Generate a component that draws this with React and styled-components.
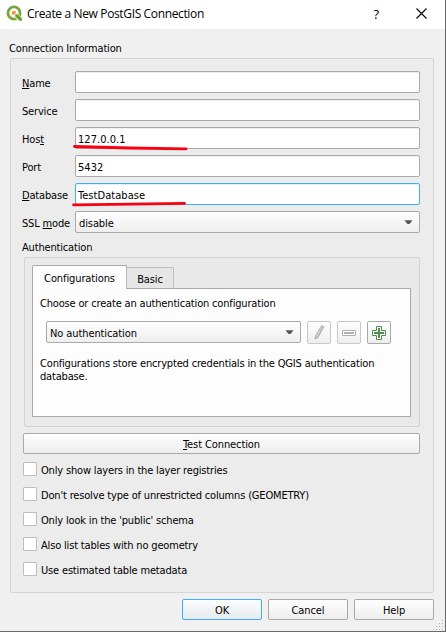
import React from 'react';
import styled, { createGlobalStyle, css } from 'styled-components';

const GlobalStyle = createGlobalStyle`
  *, *::before, *::after { box-sizing: border-box; }
  body {
    margin: 0;
    background: #fff;
    font: 11px/13px "DejaVu Sans Condensed", "DejaVu Sans", sans-serif;
    letter-spacing: -0.17px;
    color: #000;
  }
`;

const raised = css`
  border: 1px solid #a9a9a9;
  border-radius: 2px;
  background: linear-gradient(#fefefe, #eeeeee);
`;

const Dialog = styled.div`
  width: 446px;
  height: 632px;
  background: #f0f0f0;
  border-right: 1px solid #6b6b6b;
  border-bottom: 1px solid #6b6b6b;
  display: flex;
  flex-direction: column;
  position: relative;
`;

const TitleBar = styled.header`
  height: 29px;
  background: #fff;
  display: flex;
  align-items: center;
  padding: 0 18px 2px 6px;
`;

const Title = styled.h1`
  margin: 1px 0 0 4px;
  font: 12px/16px "Open Sans", sans-serif;
  letter-spacing: -0.36px;
  flex: 1;
`;

const HelpMark = styled.span`
  font: 500 13px/16px "Open Sans", sans-serif;
  margin-right: 37px;
`;

const Content = styled.main`
  padding: 13px 11px 0 10px;
  display: flex;
  flex-direction: column;
`;

const GroupTitle = styled.div`
  height: 16px;
  margin-left: ${(p) => p.$shift || 0}px;
`;

const Group = styled.section`
  height: 535px;
  border: 1px solid #d5d5d5;
  border-radius: 2px;
  background: #ececec;
  padding: 12px 13px 0 12px;
`;

const FormRow = styled.label`
  display: grid;
  grid-template-columns: 52px 345px;
  align-items: center;
  height: 22px;
  margin-bottom: 6px;
`;

const FormLabel = styled.span`
  padding-top: 2px;
  margin-left: -1px;
`;

const Field = styled.div`
  height: 22px;
  border: 1px solid ${(p) => (p.$focused ? '#3daefd' : '#a9a9a9')};
  border-radius: 2px;
  background: #fff;
  box-shadow: inset 0 1px 0 ${(p) => (p.$focused ? '#dff1fe' : '#f0f0f0')};
  padding: 5px 2px 0;
  letter-spacing: 0.05px;
`;

const Combo = styled.div`
  ${raised}
  height: 22px;
  width: ${(p) => p.$width}px;
  display: flex;
  align-items: center;
  justify-content: space-between;
  padding: 1px 6px 0 3px;
  letter-spacing: -0.1px;
`;

const ComboText = styled.span`
  padding-top: 1px;
`;

const AuthTitle = styled.div`
  height: 18px;
  padding-top: 2px;
  margin-left: -1px;
`;

const AuthGroup = styled.section`
  height: 170px;
  width: 396px;
  margin-left: 1px;
  border: 1px solid #d3d3d3;
  border-radius: 2px;
  background: #e9e9e9;
  padding: 7px 8px 0 7px;
`;

const Tabs = styled.div`
  display: flex;
  align-items: flex-end;
  height: 24px;
  position: relative;
`;

const Tab = styled.div`
  border: 1px solid ${(p) => (p.$active ? '#a9a9a9' : '#bcbcbc')};
  border-bottom: 0;
  border-radius: 2px 2px 0 0;
  width: ${(p) => p.$width}px;
  height: ${(p) => (p.$active ? 24 : 21)}px;
  margin-bottom: ${(p) => (p.$active ? 0 : 1)}px;
  margin-left: ${(p) => (p.$active ? 0 : -1)}px;
  background: ${(p) => (p.$active ? '#fdfdfd' : '#e6e6e6')};
  padding-top: ${(p) => (p.$active ? 6 : 5)}px;
  text-align: center;
  letter-spacing: -0.1px;
`;

const TabPanel = styled.div`
  height: 129px;
  width: 379px;
  margin-top: -1px;
  border: 1px solid #a9a9a9;
  background: #fdfdfd;
  padding: 8px 7px;
`;

const ConfigRow = styled.div`
  display: flex;
  gap: 6px;
  margin: 11px 0 13px 6px;
  height: 23px;
`;

const ToolButton = styled.button`
  ${raised}
  border-color: ${(p) => (p.disabled ? '#c8c8c8' : '#a9a9a9')};
  width: 24px;
  height: 23px;
  padding: 0;
  display: grid;
  place-items: center;
`;

const Note = styled.p`
  margin: 0;
`;

const Button = styled.button`
  ${raised}
  width: ${(p) => p.$width}px;
  height: 21px;
  padding: 2px 0 0;
  font: inherit;
  letter-spacing: -0.1px;
  color: #000;
  ${(p) => p.$primary && css`
    border-color: #3daefd;
    background: linear-gradient(#fcfdfe, #e6ebef);
  `}
`;

const TestButton = styled(Button)`
  display: block;
  margin: 6px 0 8px;
`;

const CheckRow = styled.label`
  display: flex;
  align-items: center;
  gap: 4px;
  height: 14px;
  margin-bottom: 11px;
`;

const CheckBox = styled.span`
  width: 14px;
  height: 14px;
  border: 1px solid #bdbdbd;
  border-radius: 1px;
  background: #fff;
`;

const CheckText = styled.span`
  padding-top: 2px;
`;

const Footer = styled.footer`
  display: flex;
  justify-content: flex-end;
  gap: 6px;
  margin-top: 6px;
`;

const Overlay = styled.svg`
  position: absolute;
  left: ${(p) => p.$x}px;
  top: ${(p) => p.$y}px;
  pointer-events: none;
`;

const Arrow = () => (
  <svg width="9" height="5" viewBox="0 0 9 5"><path d="M.5.3h8L5.5 4h-2z" fill="#555" /></svg>
);

const Logo = () => (
  <svg width="17" height="17" viewBox="0 0 17 17">
    <circle cx="8" cy="8" r="6.1" fill="none" stroke="#78a83c" strokeWidth="2.8" />
    <path d="M8.5 8.500l7 7" stroke="#fff" strokeWidth="5" />
    <path d="M9.200 9.200h2.900l3.900 4v2.500h-2.500L9.200 11.800z" fill="#6fa32f" />
    <path d="M6.200 6.200h3.600v1.600L8 9.800H6.200z" fill="#ee8a35" />
  </svg>
);

const fields = [
  { key: 'N', after: 'ame', value: '' },
  { before: 'Service', value: '' },
  { before: 'Hos', key: 't', value: '127.0.0.1' },
  { before: 'Port', value: '5432' },
  { key: 'D', after: 'atabase', value: 'TestDatabase', focused: true },
];

const options = [
  'Only show layers in the layer registries',
  "Don't resolve type of unrestricted columns (GEOMETRY)",
  "Only look in the 'public' schema",
  'Also list tables with no geometry',
  'Use estimated table metadata',
];

export default function App() {
  return (
    <>
      <GlobalStyle />
      <Dialog>
        <TitleBar>
          <Logo />
          <Title>Create a New PostGIS Connection</Title>
          <HelpMark>?</HelpMark>
          <svg width="11" height="11" viewBox="0 0 11 11"><path d="M.5.5l10 10M10.5.5l-10 10" stroke="#000" strokeWidth="1.1" /></svg>
        </TitleBar>
        <Content>
          <GroupTitle $shift={-1}>Connection Information</GroupTitle>
          <Group>
            {fields.map((f) => (
              <FormRow key={f.value + (f.before || f.key)}>
                <FormLabel>{f.before}{f.key && <u>{f.key}</u>}{f.after}</FormLabel>
                <Field $focused={f.focused}>{f.value}</Field>
              </FormRow>
            ))}
            <FormRow>
              <FormLabel>SSL <u>m</u>ode</FormLabel>
              <Combo $width={345}><ComboText>disable</ComboText><Arrow /></Combo>
            </FormRow>
            <AuthTitle>Authentication</AuthTitle>
            <AuthGroup>
              <Tabs>
                <Tab $active $width={95}>Configurations</Tab>
                <Tab $width={48}>Basic</Tab>
              </Tabs>
              <TabPanel>
                <Note>Choose or create an authentication configuration</Note>
                <ConfigRow>
                  <Combo $width={255}><ComboText>No authentication</ComboText><Arrow /></Combo>
                  <ToolButton disabled>
                    <svg width="14" height="17" viewBox="0 0 14 17">
                      <path d="M9.5 1l3 1.500-6 11L2.500 16l.5-4z" fill="#b4b4b4" />
                      <path d="M10 3l-5.500 10" stroke="#dedede" />
                    </svg>
                  </ToolButton>
                  <ToolButton disabled>
                    <svg width="14" height="6" viewBox="0 0 14 6">
                      <path d="M.5.5h13v5H.5z" fill="#fff" stroke="#b0b0b0" />
                      <path d="M2 3h10" stroke="#b0b0b0" strokeWidth="2" />
                    </svg>
                  </ToolButton>
                  <ToolButton>
                    <svg width="14" height="14" viewBox="0 0 14 14">
                      <path d="M4.5.5h5v4h4v5h-4v4h-5v-4h-4v-5h4z" fill="#fff" stroke="#4f8a4f" />
                      <path d="M7 2v10M2 7h10" stroke="#4f8a4f" strokeWidth="2" />
                    </svg>
                  </ToolButton>
                </ConfigRow>
                <Note>Configurations store encrypted credentials in the QGIS authentication<br />database.</Note>
              </TabPanel>
            </AuthGroup>
            <TestButton $width={397}><u>T</u>est Connection</TestButton>
            {options.map((o) => (
              <CheckRow key={o}><CheckBox /><CheckText>{o}</CheckText></CheckRow>
            ))}
          </Group>
          <Footer>
            <Button $width={80} $primary>OK</Button>
            <Button $width={80}>Cancel</Button>
            <Button $width={80}>Help</Button>
          </Footer>
        </Content>
        <Overlay $x={70} $y={142} width="122" height="10">
          <path d="M4.500 4.500L60 6l56 .8" fill="none" stroke="#fb0012" strokeWidth="2.800" strokeLinecap="round" />
        </Overlay>
        <Overlay $x={70} $y={199} width="122" height="10">
          <path d="M3.500 5.800L60 5.200l54.500-.8" fill="none" stroke="#fb0012" strokeWidth="2.800" strokeLinecap="round" />
        </Overlay>
        <Overlay $x={432} $y={619} width="12" height="12">
          <path d="M10 1h1v1h-1zM7 4h1v1H7zM10 4h1v1h-1zM4 7h1v1H4zM7 7h1v1H7zM10 7h1v1h-1zM1 10h1v1H1zM4 10h1v1H4zM7 10h1v1H7zM10 10h1v1h-1z" fill="#b0b0b0" />
        </Overlay>
      </Dialog>
    </>
  );
}
